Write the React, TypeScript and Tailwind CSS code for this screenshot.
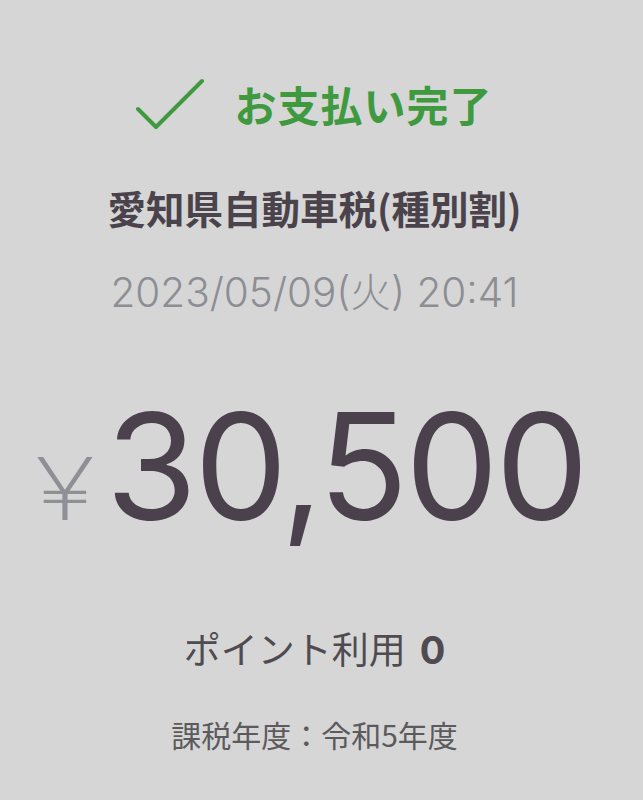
const jp = "font-['Inter','Noto_Sans_CJK_JP',sans-serif]"

export default function App() {
  return (
    <div
      className={`flex h-[800px] w-full flex-col items-center bg-[#d6d6d6] pr-[14px] ${jp}`}
    >
      <div className="mt-[74px] flex items-center gap-[30px]">
        <svg width="68" height="52" viewBox="0 0 68 52" fill="none">
          <path
            d="M2 31 L20 49 L66 3"
            stroke="#3f9a3f"
            strokeWidth="4"
            strokeLinecap="round"
            strokeLinejoin="round"
          />
        </svg>
        <h1 className="text-[42px] font-bold leading-[60px] tracking-[1px] text-[#3f9a3f] font-['Noto_Sans_CJK_JP',sans-serif]">
          お支払い完了
        </h1>
      </div>

      <h2 className="mt-[48px] text-[38.5px] font-bold leading-[50px] text-[#4a434b] font-['Noto_Sans_CJK_JP',sans-serif]">
        愛知県自動車税(種別割)
      </h2>

      <p className="mt-[36px] text-[40.5px] font-light leading-[50px] text-[#8d8e94]">
        2023/05/09(火) 20:41
      </p>

      <div className="mt-[74px] flex items-baseline gap-[11px] pl-[6px]">
        <span className="origin-right scale-x-[1.3] text-[86px] font-extralight leading-none text-[#8e9096]">
          ¥
        </span>
        <span className="text-[148px] font-normal leading-[150px] tracking-[-3px] text-[#4a414d]">
          30,500
        </span>
      </div>

      <div className="mt-[81px] flex items-baseline gap-[14px] text-[#4f4b50]">
        <span className="text-[37px] font-normal leading-[50px] font-['Noto_Sans_CJK_JP',sans-serif]">
          ポイント利用
        </span>
        <span className="text-[38px] font-bold leading-[50px]">0</span>
      </div>

      <p className="mt-[39px] text-[30px] leading-[40px] text-[#5c5a5d] font-['Noto_Sans_CJK_JP',sans-serif]">
        課税年度：令和5年度
      </p>
    </div>
  )
}
